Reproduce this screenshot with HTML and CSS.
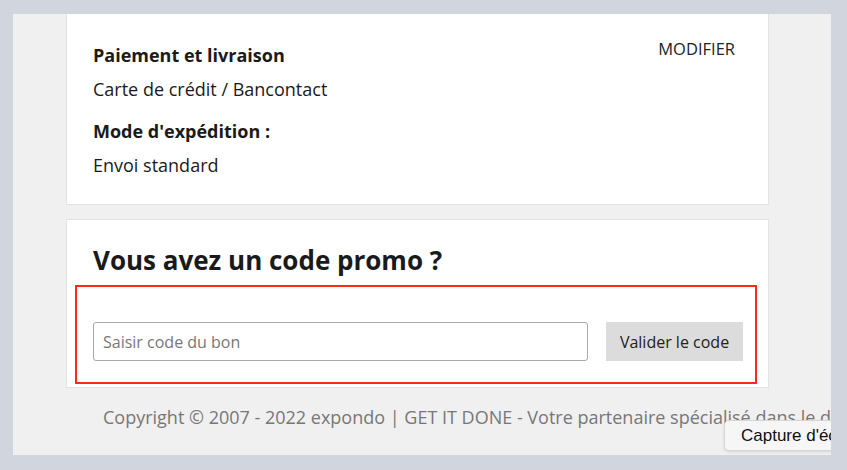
FILE: index.html
```html
<!DOCTYPE html>
<html lang="fr">
<head>
<meta charset="utf-8">
<link rel="stylesheet" href="styles.css">
</head>
<body>
<div class="panel">
  <div class="column">
    <section class="card card-summary">
      <div class="summary-head">
        <h3 class="label">Paiement et livraison</h3>
        <a class="modify">MODIFIER</a>
      </div>
      <p class="value">Carte de crédit / Bancontact</p>
      <h3 class="label label-2">Mode d'expédition :</h3>
      <p class="value">Envoi standard</p>
    </section>
    <section class="card card-promo">
      <h2 class="promo-title">Vous avez un code promo ?</h2>
      <div class="promo-box">
        <input class="promo-input" type="text" placeholder="Saisir code du bon">
        <button class="promo-btn">Valider le code</button>
      </div>
    </section>
  </div>
  <p class="copyright">Copyright © 2007 - 2022 expondo | GET IT DONE - Votre partenaire spécialisé dans le domaine</p>
  <div class="tooltip">Capture d'écran</div>
</div>
</body>
</html>
```
FILE: styles.css
```css
* { box-sizing: border-box; }
html, body { margin: 0; padding: 0; }
body {
  background: #d1d5dd;
  width: 847px;
  height: 470px;
  padding: 14px 16px 15px 13px;
  font-family: "Open Sans", sans-serif;
  color: #1a1a1a;
  overflow: hidden;
}
.panel {
  position: relative;
  width: 818px;
  height: 441px;
  background: #f0f0f0;
  overflow: hidden;
}
.column {
  margin-left: 53px;
  width: 703px;
  display: flex;
  flex-direction: column;
  gap: 14px;
}
.card {
  background: #fff;
  border: 1px solid #e3e3e3;
}
.card-summary {
  border-top: none;
  height: 191px;
  padding: 28px 33px 0 26px;
}
.summary-head {
  display: flex;
  justify-content: space-between;
  align-items: flex-start;
}
.label {
  margin: 0;
  font-size: 18px;
  font-weight: 700;
  line-height: 26px;
}
.label-2 { margin-top: 16px; }
.modify {
  font-size: 16.5px;
  color: #222;
  line-height: 20px;
  margin-top: -3px;
}
.value {
  margin: 8px 0 0;
  font-size: 18px;
  line-height: 26px;
}
.card-promo {
  height: 169px;
  padding: 23px 11px 0 8px;
}
.promo-title {
  margin: 0 0 0 18px;
  font-size: 26px;
  font-weight: 700;
  line-height: 34px;
}
.promo-box {
  margin-top: 8px;
  height: 99px;
  border: 2px solid #ff2a1a;
  display: flex;
  align-items: flex-start;
  padding: 35px 12px 0 16px;
  gap: 18px;
}
.promo-input {
  width: 495px;
  height: 39px;
  border: 1px solid #a9a9a9;
  border-radius: 3px;
  padding: 0 9px;
  font-family: "Open Sans", sans-serif;
  font-size: 16px;
  color: #333;
  background: #fff;
}
.promo-input::placeholder { color: #777; }
.promo-btn {
  width: 137px;
  height: 39px;
  border: none;
  background: #dcdcdc;
  font-family: "Open Sans", sans-serif;
  font-size: 16px;
  color: #222;
  padding: 0;
}
.copyright {
  margin: 17px 0 0 90px;
  white-space: nowrap;
  font-size: 18px;
  line-height: 24px;
  color: #777;
}
.tooltip {
  position: absolute;
  left: 711px;
  top: 406px;
  height: 31px;
  padding: 0 12px 0 16px;
  background: #f6f6f6;
  border: 1px solid #d6d6d6;
  border-radius: 5px;
  box-shadow: 0 1px 3px rgba(0,0,0,0.12);
  font-family: "Liberation Sans", Arial, sans-serif;
  font-size: 17px;
  line-height: 29px;
  color: #111;
  white-space: nowrap;
}
```
